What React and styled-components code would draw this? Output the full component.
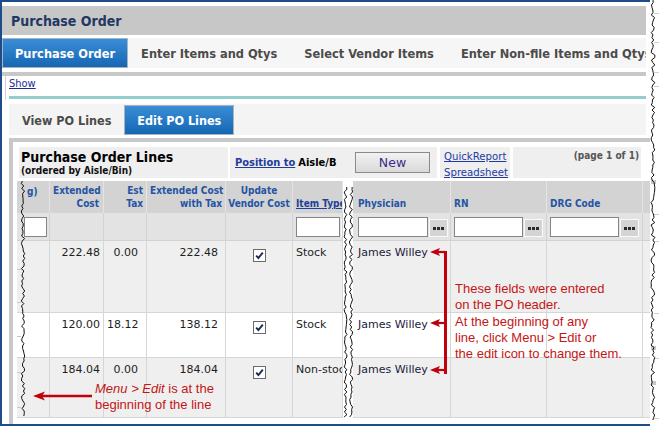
import React from 'react';
import styled, { createGlobalStyle, css } from 'styled-components';

const UI = `"DejaVu Sans Condensed", "DejaVu Sans", sans-serif`;
const VERD = `"DejaVu Sans", Verdana, sans-serif`;
const ARIAL = `"Liberation Sans", Arial, sans-serif`;
const cond = css`font-family: ${UI}; font-stretch: condensed;`;

const GlobalStyle = createGlobalStyle`
  html, body { margin: 0; padding: 0; background: #fff; }
  body { width: 659px; height: 426px; overflow: hidden; font-family: ${UI}; }
  * { box-sizing: border-box; }
`;

const Page = styled.div`
  display: flex;
  width: 659px;
  height: 426px;
  background: #fff;
  overflow: hidden;
`;

const Frame = styled.div`
  flex: none;
  width: 650px;
  height: 426px;
  border-top: 2px solid #1d4c89;
  border-bottom: 2px solid #1d4c89;
  border-left: 2px solid #1d4c89;
  display: flex;
  flex-direction: column;
  overflow: hidden;
`;

const TitleBar = styled.div`
  flex: none;
  margin: 4px 4px 0 0;
  height: 29px;
  background: #c7c7c7;
  display: flex;
  align-items: center;
  padding-left: 9px;
  ${cond};
  font-weight: bold;
  font-size: 14px;
  color: #1f3862;
`;

const tabBase = css`
  display: flex;
  align-items: center;
  white-space: nowrap;
  ${cond};
  font-weight: bold;
  color: #4b4b4b;
  padding: 0 13px;
  ${p => p.$active && css`
    color: #fff;
    padding: 0 12px;
    border: 1px solid #a9b4bf;
    background: linear-gradient(#3a8dd6, #1567b4);
  `}
`;

const MainTabs = styled.div`
  flex: none;
  margin: 3px 4px 0 0;
  height: 30px;
  background: #f6f6f6;
  display: flex;
  overflow: hidden;
`;

const MainTab = styled.div`
  ${tabBase};
  font-size: 12.7px;
  padding-right: ${p => (p.$active ? 12 : 14)}px;
`;

const GrayRule = styled.div`
  flex: none;
  margin: 4px 4px 0 0;
  height: 4px;
  background: #c8c8c8;
`;

const ShowSection = styled.div`
  flex: none;
  height: 24px;
  margin: 0 4px 0 3px;
  border-left: 1px solid #cfcfcf;
  padding: 1px 0 0 3px;
  display: flex;
  flex-direction: column;
`;

const ShowLink = styled.a`
  ${cond};
  font-size: 11px;
  line-height: 13px;
  color: #1a2b93;
  text-decoration: underline;
  align-self: flex-start;
`;

const TealRule = styled.div`
  margin-top: 6px;
  height: 3px;
  background: #93cdcd;
`;

const SubTabs = styled.div`
  flex: none;
  margin: 4px 4px 0 7px;
  height: 31px;
  padding-top: 1px;
  background: #f4f4f4;
  display: flex;
`;

const SubTab = styled.div`
  ${tabBase};
  font-size: 12.5px;
`;

const Panel = styled.div`
  flex: 1;
  margin: 3px 0 0 7px;
  border-top: 4px solid #c8c8c8;
  border-left: 4px solid #c8c8c8;
  padding: 5px 0 0 4px;
  background: #fff;
  min-width: 0;
`;

const TitleRow = styled.div`
  display: flex;
  height: 31px;
  margin-left: 2px;
`;

const TitleCell = styled.div`
  flex: none;
  width: ${p => p.$w}px;
  margin-right: ${p => p.$mr || 0}px;
  background: #efefef;
  display: flex;
`;

const TitleBlock = styled.div`
  padding: 3px 0 0 2px;
  display: flex;
  flex-direction: column;
`;

const PanelTitle = styled.div`
  ${cond};
  font-weight: bold;
  font-size: 14px;
  line-height: 15px;
  color: #000;
`;

const PanelSub = styled.div`
  ${cond};
  font-weight: bold;
  font-size: 10px;
  line-height: 12px;
  color: #111;
`;

const PositionBox = styled.div`
  flex: 1;
  display: flex;
  align-items: center;
  padding: 0 7px 0 5px;
`;

const PositionLink = styled.a`
  ${cond};
  font-weight: bold;
  font-size: 11px;
  color: #1f3c9c;
  text-decoration: underline;
`;

const AisleText = styled.span`
  ${cond};
  font-weight: bold;
  font-size: 11px;
  color: #000;
  margin-left: 3px;
`;

const NewButton = styled.button`
  margin-left: auto;
  width: 75px;
  height: 21px;
  padding: 0;
  border: 1px solid #8a8a8a;
  background: linear-gradient(#f2f2f2, #d9d9d9);
  font-family: ${VERD};
  font-size: 12.5px;
  color: #3d2a88;
`;

const ReportBox = styled.div`
  padding: 2px 0 0 4px;
  display: flex;
  flex-direction: column;
`;

const ReportLink = styled.a`
  ${cond};
  font-size: 11.3px;
  line-height: 16px;
  color: #1f3aa5;
  text-decoration: underline;
`;

const PageInfo = styled.div`
  flex: 1;
  text-align: right;
  padding: 3px 2px 0 0;
  ${cond};
  font-weight: bold;
  font-size: 10px;
  line-height: 12px;
  color: #555;
`;

const TableWrap = styled.div`
  position: relative;
  margin-top: 3px;
`;

const Grid = styled.div`
  display: grid;
  grid-template-columns: 33px 54px 43px 79px 67px 50px 10px 98px 96px 96px 40px;
  grid-template-rows: 32px 28px 72px 45px 60px;
`;

const HeadCell = styled.div`
  background: #d3d3d3;
  border-right: 1px solid #e4e4e4;
  display: flex;
  flex-direction: column;
  justify-content: ${p => (p.$top ? 'flex-start' : 'flex-end')};
  padding: ${p => (p.$top ? 5 : 0)}px ${p => p.$pr ?? 3}px 3px ${p => p.$pl ?? 3}px;
  text-align: ${p => p.$align || 'left'};
  ${cond};
  font-weight: bold;
  font-size: 10px;
  line-height: 12.3px;
  color: #2554a3;
  white-space: nowrap;
  overflow: hidden;
`;

const HeadLink = styled.a`
  color: #1f3f99;
  text-decoration: underline;
`;

const FilterCell = styled.div`
  background: #e3e3e3;
  border-right: 1px solid #d2d2d2;
  border-bottom: 1px solid #d2d2d2;
  display: flex;
  align-items: center;
  padding-left: ${p => p.$pl ?? 3}px;
  overflow: hidden;
`;

const FilterInput = styled.input`
  flex: none;
  width: ${p => p.$w}px;
  height: 20px;
  margin: 0;
  padding: 0;
  background: #fff;
  border: 1px solid #858585;
  outline: none;
`;

const DotsButton = styled.span`
  flex: none;
  display: flex;
  width: 19px;
  height: 18px;
  margin: 3px 0 0 1px;
  background: #d4d4d4;
  border: 1px solid #fafafa;
`;

const DataCell = styled.div`
  background: ${p => (p.$alt ? '#efefef' : '#fff')};
  border-right: 1px solid #d6d6d6;
  border-bottom: 1px solid #d6d6d6;
  padding: ${p => p.$pt ?? 5}px ${p => p.$pr ?? 3}px 0 ${p => p.$pl ?? 3}px;
  text-align: ${p => p.$align || 'left'};
  font-family: ${VERD};
  font-size: 11px;
  line-height: 14px;
  color: ${p => p.$ink || '#1e1e1e'};
  white-space: nowrap;
  overflow: hidden;
`;

const CheckBox = styled.span`
  display: inline-flex;
  width: 13px;
  height: 13px;
  background: #fff;
  border: 1px solid #6b6b6b;
`;

const TearStrip = styled.div`
  grid-column: 7;
  grid-row: 1 / -1;
  background: #fff;
  position: relative;
  z-index: 1;
`;

const TearSvg = styled.svg`
  display: block;
  overflow: visible;
`;

const Overlay = styled.svg`
  position: absolute;
  left: 0;
  top: 0;
  pointer-events: none;
  overflow: visible;
  z-index: 2;
`;

const NoteText = styled.div`
  position: absolute;
  left: ${p => p.$x}px;
  top: ${p => p.$y}px;
  z-index: 3;
  font-family: ${ARIAL};
  font-size: 13px;
  line-height: 16.25px;
  color: #c41616;
  white-space: nowrap;
`;

const RightEdge = styled.div`
  flex: 1;
  background: #fff;
`;

function rng(seed) {
  let s = seed;
  return () => {
    s = (s * 9301 + 49297) % 233280;
    return s / 233280;
  };
}

function jag(x, amp, y0, y1, seed, step = 2.5) {
  const r = rng(seed);
  const pts = [];
  for (let y = y0; y <= y1; y += step) {
    pts.push(`${(x + (r() - 0.5) * amp).toFixed(1)},${y.toFixed(1)}`);
  }
  return pts.join(' ');
}

const Dots = () => (
  <svg width="17" height="16" viewBox="0 0 17 16">
    <rect x="3" y="7" width="3" height="3" fill="#2a2a2a" />
    <rect x="7" y="7" width="3" height="3" fill="#2a2a2a" />
    <rect x="11" y="7" width="3" height="3" fill="#2a2a2a" />
  </svg>
);

const Check = () => (
  <svg width="11" height="11" viewBox="0 0 11 11">
    <path d="M2.2 5.6 L4.4 8 L8.8 2.6" fill="none" stroke="#1b2a55" strokeWidth="1.9" />
  </svg>
);

const rows = [
  { alt: true, ext: '222.48', tax: '0.00', withTax: '222.48', type: 'Stock' },
  { alt: false, ext: '120.00', tax: '18.12', withTax: '138.12', type: 'Stock' },
  { alt: true, ext: '184.04', tax: '0.00', withTax: '184.04', type: 'Non-stock' },
];

const RED = '#c0000c';

function Arrow({ tipX, y, baseX }) {
  return (
    <g>
      <line x1={tipX + 8} y1={y} x2={baseX} y2={y} stroke={RED} strokeWidth="2.2" />
      <polygon points={`${tipX},${y} ${tipX + 10},${y - 4} ${tipX + 8},${y} ${tipX + 10},${y + 4}`} fill={RED} />
    </g>
  );
}

export default function App() {
  return (
    <>
      <GlobalStyle />
      <Page>
        <Frame>
          <TitleBar>Purchase Order</TitleBar>
          <MainTabs>
            <MainTab $active>Purchase Order</MainTab>
            <MainTab>Enter Items and Qtys</MainTab>
            <MainTab>Select Vendor Items</MainTab>
            <MainTab>Enter Non-file Items and Qtys</MainTab>
          </MainTabs>
          <GrayRule />
          <ShowSection>
            <ShowLink href="#">Show</ShowLink>
            <TealRule />
          </ShowSection>
          <SubTabs>
            <SubTab>View PO Lines</SubTab>
            <SubTab $active>Edit PO Lines</SubTab>
          </SubTabs>
          <Panel>
            <TitleRow>
              <TitleCell $w={209} $mr={2}>
                <TitleBlock>
                  <PanelTitle>Purchase Order Lines</PanelTitle>
                  <PanelSub>(ordered by Aisle/Bin)</PanelSub>
                </TitleBlock>
              </TitleCell>
              <TitleCell $w={207} $mr={3}>
                <PositionBox>
                  <PositionLink href="#">Position to</PositionLink>
                  <AisleText>Aisle/B</AisleText>
                  <NewButton>New</NewButton>
                </PositionBox>
              </TitleCell>
              <TitleCell $w={70} $mr={3}>
                <ReportBox>
                  <ReportLink href="#">QuickReport</ReportLink>
                  <ReportLink href="#">Spreadsheet</ReportLink>
                </ReportBox>
              </TitleCell>
              <TitleCell $w={128}>
                <PageInfo>(page 1 of 1)</PageInfo>
              </TitleCell>
            </TitleRow>

            <TableWrap>
              <Grid>
                <TearStrip>
                  <TearSvg width="10" height="237">
                    <polyline points={jag(2.5, 3, 6, 237, 17)} fill="none" stroke="#111" strokeWidth="1" />
                    <polyline points={jag(8, 3.5, 6, 237, 91)} fill="none" stroke="#111" strokeWidth="1" />
                  </TearSvg>
                </TearStrip>

                <HeadCell $top $pl={10}>g)</HeadCell>
                <HeadCell $align="right" $pr={4}><span>Extended</span><span>Cost</span></HeadCell>
                <HeadCell $align="right"><span>Est</span><span>Tax</span></HeadCell>
                <HeadCell $align="right"><span>Extended Cost</span><span>with Tax</span></HeadCell>
                <HeadCell $align="center" $pl={1} $pr={1}><span>Update</span><span>Vendor Cost</span></HeadCell>
                <HeadCell><HeadLink href="#">Item Type</HeadLink></HeadCell>
                <HeadCell $pl={5}>Physician</HeadCell>
                <HeadCell>RN</HeadCell>
                <HeadCell>DRG Code</HeadCell>
                <HeadCell />

                <FilterCell $pl={7}><FilterInput $w={23} readOnly /></FilterCell>
                <FilterCell />
                <FilterCell />
                <FilterCell />
                <FilterCell />
                <FilterCell><FilterInput $w={44} readOnly /><DotsButton><Dots /></DotsButton></FilterCell>
                <FilterCell $pl={5}><FilterInput $w={70} readOnly /><DotsButton><Dots /></DotsButton></FilterCell>
                <FilterCell><FilterInput $w={69} readOnly /><DotsButton><Dots /></DotsButton></FilterCell>
                <FilterCell><FilterInput $w={69} readOnly /><DotsButton><Dots /></DotsButton></FilterCell>
                <FilterCell />

                {rows.map((r, i) => (
                  <React.Fragment key={i}>
                    <DataCell $alt={r.alt} />
                    <DataCell $alt={r.alt} $align="right" $pr={3}>{r.ext}</DataCell>
                    <DataCell $alt={r.alt} $align="right" $pr={8}>{r.tax}</DataCell>
                    <DataCell $alt={r.alt} $align="right" $pr={7}>{r.withTax}</DataCell>
                    <DataCell $alt={r.alt} $align="center" $pt={8}>
                      <CheckBox><Check /></CheckBox>
                    </DataCell>
                    <DataCell $alt={r.alt}>{r.type}</DataCell>
                    <DataCell $alt={r.alt} $pl={5} $ink="#1b1b3a">James Willey</DataCell>
                    <DataCell $alt={r.alt} />
                    <DataCell $alt={r.alt} />
                    <DataCell $alt={r.alt} />
                  </React.Fragment>
                ))}
              </Grid>

              <Overlay width="640" height="240">
                <polyline points={jag(6, 3.5, 0, 237, 53)} fill="none" stroke="#111" strokeWidth="1" />
                <g stroke="#c9c9c9" strokeWidth="1">
                  <line x1="0" y1="88.5" x2="4" y2="88.5" />
                  <line x1="0" y1="121.5" x2="4" y2="121.5" />
                  <line x1="0" y1="155.5" x2="4" y2="155.5" />
                  <line x1="0" y1="191.5" x2="4" y2="191.5" />
                  <line x1="0" y1="226.5" x2="4" y2="226.5" />
                </g>
                <line x1="75" y1="215" x2="24" y2="215" stroke={RED} strokeWidth="2.4" />
                <polygon points="16,215 28,210.5 25,215 28,219.5" fill={RED} />
                <rect x="427" y="70" width="3" height="123" fill={RED} />
                <Arrow tipX={413} y={71} baseX={428} />
                <Arrow tipX={413} y={142} baseX={428} />
                <Arrow tipX={413} y={189} baseX={428} />
              </Overlay>
              <NoteText $x={438} $y={100}>
                These fields were entered<br />
                on the PO header.<br />
                At the beginning of any<br />
                line, click Menu &gt; Edit or<br />
                the edit icon to change them.
              </NoteText>
              <NoteText $x={78} $y={200}>
                <i>Menu &gt; Edit</i> is at the<br />
                beginning of the line
              </NoteText>
            </TableWrap>
          </Panel>
        </Frame>
        <RightEdge>
          <TearSvg width="9" height="426">
            <g stroke="#cfcfcf" strokeWidth="1">
              {[13, 42, 72, 86, 214, 241, 313, 358, 418].map(y => (
                <line key={y} x1="4" y1={y + 0.5} x2="9" y2={y + 0.5} />
              ))}
            </g>
            <rect x="1" y="180" width="5" height="4" fill="#c8c8c8" />
            <rect x="1" y="346" width="5" height="4" fill="#c8c8c8" />
            <rect x="1" y="381" width="5" height="4" fill="#c8c8c8" />
            <polyline points={jag(3, 4, 0, 422, 7)} fill="none" stroke="#111" strokeWidth="1" />
          </TearSvg>
        </RightEdge>
      </Page>
    </>
  );
}
